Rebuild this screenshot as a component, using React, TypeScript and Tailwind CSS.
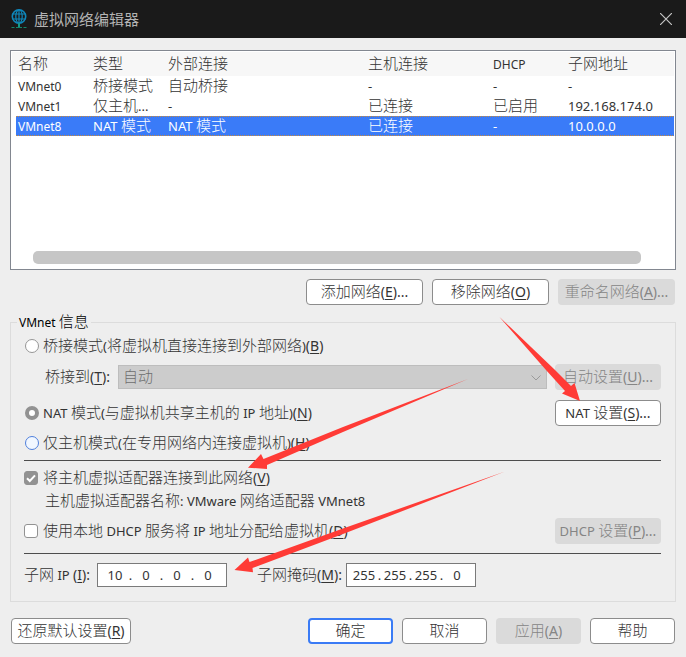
import { useState } from 'react';
import type { ReactNode } from 'react';
import clsx from 'clsx';

interface MixedProps {
  text: string;
  accel?: string;
  tail?: string;
  small?: boolean;
}

// Latin runs are set smaller than the Chinese ones, as the system font does
function Mixed({ text, accel, tail = '', small }: MixedProps) {
  const runs = text.split(/([\u4e00-\u9fff]+)/).filter(Boolean);
  return (
    <span className="inline-block pb-[2px] align-top leading-[18px] font-light whitespace-pre">
      {runs.map((run, i) =>
        /[\u4e00-\u9fff]/.test(run) ? (
          run
        ) : (
          <span key={i} className={clsx('leading-none font-normal', small ? 'text-[12px]' : 'text-[13px]')}>
            {run}
          </span>
        )
      )}
      {accel && (
        <span className="text-[14px] leading-none font-normal">
          (<span className="underline underline-offset-2">{accel}</span>){tail}
        </span>
      )}
    </span>
  );
}

interface ButtonProps extends MixedProps {
  className?: string;
  disabled?: boolean;
  primary?: boolean;
}

function Button({ className, disabled, primary, ...label }: ButtonProps) {
  return (
    <button
      type="button"
      disabled={disabled}
      className={clsx(
        'flex h-[26px] shrink-0 items-center justify-center rounded-[4px]',
        disabled && 'bg-[#dadada] text-[#858585]',
        !disabled && 'bg-white',
        !disabled && (primary ? 'border-2 border-[#3a7bf5]' : 'border border-[#8c8c8c]'),
        className
      )}
    >
      <Mixed {...label} />
    </button>
  );
}

const networks = [
  { name: 'VMnet0', cells: ['桥接模式', '自动桥接', '-', '-', '-'] },
  { name: 'VMnet1', cells: ['仅主机...', '-', '已连接', '已启用', '192.168.174.0'] },
  { name: 'VMnet8', cells: ['NAT 模式', 'NAT 模式', '已连接', '-', '10.0.0.0'] },
];

// Blue fill with the dotted focus line along the top and bottom
const activeRow =
  'bg-[#3a7bf8] bg-[image:repeating-linear-gradient(90deg,#c98a3c_0_1px,#3a7bf8_1px_2px),repeating-linear-gradient(90deg,#c98a3c_0_1px,#3a7bf8_1px_2px)] bg-[length:100%_1px] bg-[position:0_0,0_100%] bg-no-repeat text-white';

function NetworkList() {
  const [selected, setSelected] = useState('VMnet8');

  return (
    <div className="flex h-[220px] flex-col border border-[#828790] bg-white p-px">
      <table className="w-full table-fixed border-separate border-spacing-0 text-left">
        <colgroup>
          <col className="w-[79px]" />
          <col className="w-[75px]" />
          <col className="w-[200px]" />
          <col className="w-[125px]" />
          <col className="w-[75px]" />
          <col />
        </colgroup>
        <thead>
          <tr className="h-6 bg-[#f7f7f7]">
            {['名称', '类型', '外部连接', '主机连接', 'DHCP', '子网地址'].map((title, i) => (
              <th key={title} className={clsx('p-0 font-normal', i === 0 ? 'pl-[6px]' : 'pl-[2px]')}>
                <Mixed text={title} small />
              </th>
            ))}
          </tr>
        </thead>
        <tbody>
          {networks.map(({ name, cells }) => (
            <tr key={name} className={clsx('h-5', name === selected && activeRow)} onClick={() => setSelected(name)}>
              <td className="border-l-4 border-l-white p-0 pl-[2px]">
                <Mixed text={name} small />
              </td>
              {cells.map((cell, i) => (
                <td key={i} className="p-0 pl-[2px]">
                  <Mixed text={cell} />
                </td>
              ))}
            </tr>
          ))}
        </tbody>
      </table>
      <div className="mt-auto mr-[33px] mb-1 ml-[21px] h-[13px] rounded-[5px] bg-[#c6c6c6]" />
    </div>
  );
}

interface ChoiceProps extends MixedProps {
  id: string;
  checked: boolean;
  onChange: () => void;
  highlighted?: boolean;
}

function RadioOption({ id, checked, onChange, highlighted, ...label }: ChoiceProps) {
  return (
    <div className="flex items-center gap-1">
      <input
        id={id}
        type="radio"
        name="mode"
        checked={checked}
        onChange={onChange}
        className={clsx(
          'ml-px size-[14px] shrink-0 appearance-none rounded-full',
          checked && 'border-4 border-[#929292] bg-white',
          !checked && highlighted && 'border border-[#4f80dc] bg-[#f1f7ff]',
          !checked && !highlighted && 'border border-[#969696] bg-white'
        )}
      />
      <label htmlFor={id}>
        <Mixed {...label} />
      </label>
    </div>
  );
}

function CheckOption({ id, checked, onChange, ...label }: ChoiceProps) {
  return (
    <div className="flex items-center gap-[5px]">
      <span className="relative flex size-[14px] shrink-0">
        <input
          id={id}
          type="checkbox"
          checked={checked}
          onChange={onChange}
          className={clsx(
            'size-[14px] appearance-none rounded-[3px] border border-[#929292]',
            checked ? 'bg-[#929292]' : 'bg-white'
          )}
        />
        {checked && (
          <svg viewBox="0 0 14 14" className="pointer-events-none absolute inset-0" fill="none">
            <path d="M3 7.2 5.8 10 11 4.4" stroke="#fff" strokeWidth="2" />
          </svg>
        )}
      </span>
      <label htmlFor={id}>
        <Mixed {...label} />
      </label>
    </div>
  );
}

interface IpFieldProps {
  id: string;
  name: string;
  octets: string[];
}

function IpField({ id, name, octets }: IpFieldProps) {
  const [values, setValues] = useState(octets);

  return (
    <div className="flex h-6 w-[130px] items-center border border-[#7a7a7a] bg-white px-[3px] text-[13px]">
      {values.map((value, i) => (
        <div key={i} className="flex items-center">
          {i > 0 && <span className="flex w-[3px] justify-center">.</span>}
          <input
            id={i === 0 ? id : undefined}
            aria-label={`${name} ${i + 1}`}
            value={value}
            maxLength={3}
            onChange={(e) => setValues(values.map((v, j) => (j === i ? e.target.value : v)))}
            className="w-7 bg-transparent text-center outline-none"
          />
        </div>
      ))}
    </div>
  );
}

function Row({ children, className }: { children: ReactNode; className?: string }) {
  return <div className={clsx('flex items-center justify-between', className)}>{children}</div>;
}

function GlobeIcon() {
  return (
    <svg viewBox="0 0 18 20" className="h-5 w-[18px]" fill="none" stroke="#0f87bb">
      <circle cx="9" cy="7.5" r="6.7" strokeWidth="1.6" />
      <ellipse cx="9" cy="7.5" rx="3.200" ry="6.7" strokeWidth="1.2" />
      <path d="M2.500 5h13M2.500 10h13M9 1v13" strokeWidth="1.2" />
      <path d="M9 14v4" stroke="#159a8c" strokeWidth="2" />
      <path d="M1.500 18.500h3M6 18.500h6M13.500 18.500h3" stroke="#14876c" />
    </svg>
  );
}

function Arrows() {
  return (
    <svg
      width="686"
      height="657"
      viewBox="0 0 686 657"
      fill="#ff3b36"
      className="pointer-events-none absolute top-0 left-0"
    >
      <path d="M499.500 317 L554 369 L571 386 L574.500 383 L580 401 L562 393.500 L565 391 L546 370Z" />
      <path d="M468 379 L343 432 L267 465 L267 469 L248 467.700 L261 454 L263.500 459 L343 427Z" />
      <path d="M505 471.500 L343 534 L252.500 568 L253 572.300 L234.500 570 L248 557.500 L249.500 562 L343 528.500Z" />
    </svg>
  );
}

export default function App() {
  const [mode, setMode] = useState('nat');
  const [hostAdapter, setHostAdapter] = useState(true);
  const [dhcp, setDhcp] = useState(false);

  return (
    <div className="relative flex min-h-screen flex-col bg-[#eeeeee] font-['Noto_Sans','Noto_Sans_CJK_SC',sans-serif] text-[15px] leading-5 text-[#333333]">
      <header className="flex h-[38px] items-center bg-[#1a1a1a] pr-[14px] pl-[10px] text-[#b4b4b4]">
        <GlobeIcon />
        <h1 className="ml-[6px] flex-1">虚拟网络编辑器</h1>
        <button type="button" aria-label="关闭">
          <svg viewBox="0 0 12 12" className="size-3" stroke="#c4c4c4" strokeWidth="1.2">
            <path d="M0 0 12 12M12 0 0 12" />
          </svg>
        </button>
      </header>

      <main className="px-[10px] pt-3 pb-[13px]">
        <NetworkList />

        <div className="mt-[9px] flex justify-end gap-[9px] px-px">
          <Button text="添加网络" accel="E" tail="..." className="w-[117px]" />
          <Button text="移除网络" accel="O" className="w-[117px]" />
          <Button text="重命名网络" accel="A" tail="..." className="w-[117px]" disabled />
        </div>

        <fieldset className="mt-[7px] border border-[#dcdcdc] pr-[14px] pb-[14px] pl-[13px]">
          <legend className="-ml-[7px] px-[2px] text-black">
            <Mixed text="VMnet 信息" small />
          </legend>

          <Row className="h-7">
            <RadioOption
              id="bridged"
              checked={mode === 'bridged'}
              onChange={() => setMode('bridged')}
              text="桥接模式(将虚拟机直接连接到外部网络)"
              accel="B"
            />
          </Row>
          <Row className="mt-1 pl-[21px]">
            <label htmlFor="adapter" className="w-[73px]">
              <Mixed text="桥接到" accel="T" tail=":" />
            </label>
            <div className="relative mr-2 flex-1">
              <select
                id="adapter"
                disabled
                className="block h-6 w-full appearance-none border border-[#bdbdbd] bg-[#cccccc] pb-[2px] pl-1 font-light text-[#6e6e6e] opacity-100"
              >
                <option>自动</option>
              </select>
              <svg
                viewBox="0 0 10 6"
                className="pointer-events-none absolute top-[10px] right-[6px] h-[6px] w-[10px]"
                fill="none"
                stroke="#9a9a9a"
              >
                <path d="M.5.5 5 5 9.500.5" />
              </svg>
            </div>
            <Button text="自动设置" accel="U" tail="..." className="w-[106px]" disabled />
          </Row>
          <Row className="mt-[10px]">
            <RadioOption
              id="nat"
              checked={mode === 'nat'}
              onChange={() => setMode('nat')}
              text="NAT 模式(与虚拟机共享主机的 IP 地址)"
              accel="N"
            />
            <Button text="NAT 设置" accel="S" tail="..." className="w-[106px]" />
          </Row>
          <Row className="mt-1 h-[26px]">
            <RadioOption
              id="host-only"
              checked={mode === 'host'}
              onChange={() => setMode('host')}
              highlighted
              text="仅主机模式(在专用网络内连接虚拟机)"
              accel="H"
            />
          </Row>

          <hr className="mt-1 border-[#4d4d4d]" />

          <Row className="mt-[5px] h-6">
            <CheckOption
              id="host-adapter"
              checked={hostAdapter}
              onChange={() => setHostAdapter(!hostAdapter)}
              text="将主机虚拟适配器连接到此网络"
              accel="V"
            />
          </Row>
          <p className="h-[22px] pt-px pl-[21px]">
            <Mixed text="主机虚拟适配器名称: VMware 网络适配器 VMnet8" />
          </p>
          <Row className="mt-[6px]">
            <CheckOption
              id="dhcp"
              checked={dhcp}
              onChange={() => setDhcp(!dhcp)}
              text="使用本地 DHCP 服务将 IP 地址分配给虚拟机"
              accel="D"
            />
            <Button text="DHCP 设置" accel="P" tail="..." className="w-[106px]" disabled />
          </Row>

          <hr className="mt-[9px] border-[#4d4d4d]" />

          <div className="mt-[9px] flex items-center">
            <label htmlFor="subnet-ip" className="w-[73px]">
              <Mixed text="子网 IP " accel="I" tail=":" />
            </label>
            <IpField id="subnet-ip" name="子网 IP" octets={['10', '0', '0', '0']} />
            <label htmlFor="subnet-mask" className="ml-[30px] w-[89px]">
              <Mixed text="子网掩码" accel="M" tail=":" />
            </label>
            <IpField id="subnet-mask" name="子网掩码" octets={['255', '255', '255', '0']} />
          </div>
        </fieldset>

        <div className="mt-4 flex gap-[9px] px-px">
          <Button text="还原默认设置" accel="R" className="mr-auto w-[120px]" />
          <Button text="确定" className="w-[85px]" primary />
          <Button text="取消" className="w-[85px]" />
          <Button text="应用" accel="A" className="w-[85px]" disabled />
          <Button text="帮助" className="w-[85px]" />
        </div>
      </main>

      <Arrows />
    </div>
  );
}
